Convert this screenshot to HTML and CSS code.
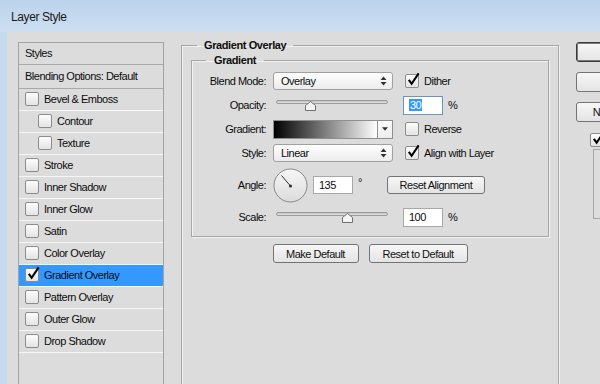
FILE: index.html
```html
<!DOCTYPE html>
<html lang="en">
<head>
    <meta charset="UTF-8">
    <meta name="viewport" content="width=device-width, initial-scale=1.0">
    <title>Layer Style</title>
    <link rel="stylesheet" href="styles.css">
</head>
<body>
    <div class="titlebar">Layer Style</div>

    <div class="frame">
        <ul class="styles-list">
            <li class="head styles-head">Styles</li>
            <li class="head blend-head">Blending Options: Default</li>
            <li><span class="cb"></span>Bevel &amp; Emboss</li>
            <li class="sub"><span class="cb"></span>Contour</li>
            <li class="sub"><span class="cb"></span>Texture</li>
            <li><span class="cb"></span>Stroke</li>
            <li><span class="cb"></span>Inner Shadow</li>
            <li><span class="cb"></span>Inner Glow</li>
            <li><span class="cb"></span>Satin</li>
            <li><span class="cb"></span>Color Overlay</li>
            <li class="selected">
                <span class="cb"><svg class="tick" viewBox="0 0 16 16"><path d="M3 8.5 L6 12.5 L13.5 1.5"/></svg></span>Gradient Overlay
            </li>
            <li><span class="cb"></span>Pattern Overlay</li>
            <li><span class="cb"></span>Outer Glow</li>
            <li><span class="cb"></span>Drop Shadow</li>
        </ul>

        <div class="main">
            <fieldset class="group outer">
                <legend>Gradient Overlay</legend>
                <fieldset class="group inner">
                    <legend>Gradient</legend>

                    <div class="row">
                        <span class="lbl">Blend Mode:</span>
                        <div class="select">
                            <span>Overlay</span>
                            <svg class="updown" viewBox="0 0 7 10"><path d="M0.5 4 L3.5 0.5 L6.5 4 Z M0.5 6 L3.5 9.5 L6.5 6 Z"/></svg>
                        </div>
                        <span class="check">
                            <span class="cb"><svg class="tick" viewBox="0 0 16 16"><path d="M3 8.5 L6 12.5 L13.5 1.5"/></svg></span>Dither
                        </span>
                    </div>

                    <div class="row">
                        <span class="lbl">Opacity:</span>
                        <div class="slider">
                            <div class="track"></div>
                            <svg class="thumb" style="left: 30%" viewBox="0 0 11 10"><path d="M0.5 9.5 V4.5 L5.5 0.5 L10.5 4.5 V9.5 Z"/></svg>
                        </div>
                        <div class="field focus"><span class="sel">30</span></div>
                        <span class="unit">%</span>
                    </div>

                    <div class="row">
                        <span class="lbl">Gradient:</span>
                        <div class="gradient">
                            <div class="ramp"></div>
                            <div class="drop"><svg viewBox="0 0 7 4"><path d="M0 0 H7 L3.5 4 Z"/></svg></div>
                        </div>
                        <span class="check"><span class="cb"></span>Reverse</span>
                    </div>

                    <div class="row">
                        <span class="lbl">Style:</span>
                        <div class="select">
                            <span>Linear</span>
                            <svg class="updown" viewBox="0 0 7 10"><path d="M0.5 4 L3.5 0.5 L6.5 4 Z M0.5 6 L3.5 9.5 L6.5 6 Z"/></svg>
                        </div>
                        <span class="check">
                            <span class="cb"><svg class="tick" viewBox="0 0 16 16"><path d="M3 8.5 L6 12.5 L13.5 1.5"/></svg></span>Align with Layer
                        </span>
                    </div>

                    <div class="row angle-row">
                        <span class="lbl">Angle:</span>
                        <svg class="dial" viewBox="0 0 35 35">
                            <defs>
                                <linearGradient id="dialFill" x1="0" y1="0" x2="0" y2="1">
                                    <stop offset="0" stop-color="#f6f6f6"/>
                                    <stop offset="1" stop-color="#dcdcdc"/>
                                </linearGradient>
                            </defs>
                            <circle cx="17.5" cy="17.5" r="16.5" fill="url(#dialFill)" stroke="#888"/>
                            <line x1="17.5" y1="18" x2="8.5" y2="7.5" stroke="#333" stroke-width="1"/>
                            <circle cx="17.5" cy="18" r="1.6" fill="#333"/>
                        </svg>
                        <div class="field angle-field">135</div>
                        <span class="deg">°</span>
                        <button class="btn reset-align">Reset Alignment</button>
                    </div>

                    <div class="row">
                        <span class="lbl">Scale:</span>
                        <div class="slider">
                            <div class="track"></div>
                            <svg class="thumb" style="left: 61%" viewBox="0 0 11 10"><path d="M0.5 9.5 V4.5 L5.5 0.5 L10.5 4.5 V9.5 Z"/></svg>
                        </div>
                        <div class="field">100</div>
                        <span class="unit">%</span>
                    </div>
                </fieldset>

                <div class="defaults">
                    <button class="btn make-default">Make Default</button>
                    <button class="btn reset-default">Reset to Default</button>
                </div>
            </fieldset>
        </div>

        <div class="side">
            <button class="btn side-btn default">OK</button>
            <button class="btn side-btn">Cancel</button>
            <button class="btn side-btn">New Style...</button>
            <span class="check preview-check">
                <span class="cb"><svg class="tick" viewBox="0 0 16 16"><path d="M3 8.5 L6 12.5 L13.5 1.5"/></svg></span>Preview
            </span>
            <div class="preview"></div>
        </div>
    </div>
</body>
</html>
```

FILE: styles.css
```css
* {
    box-sizing: border-box;
}
html, body {
    margin: 0;
    height: 100%;
    overflow: hidden;
}
body {
    font-family: 'Liberation Sans', Arial, sans-serif;
    font-size: 11px;
    letter-spacing: -0.5px;
    color: #0c0c0c;
    background: #dcdcdc;
}
.titlebar {
    height: 32px;
    padding: 10px 0 0 11px;
    background: linear-gradient(#bcd3ec, #cddff1);
    font-size: 12px;
    letter-spacing: -0.4px;
    color: #1a1a1a;
}
.frame {
    display: flex;
    align-items: flex-start;
    height: 352px;
    border-left: 7px solid #c4d8ee;
    padding-left: 11px;
}

/* left styles list */
.styles-list {
    flex: none;
    list-style: none;
    margin: 10px 0 0;
    padding: 0;
    width: 146px;
    height: 360px;
    border: 1px solid #a3a3a3;
}
.styles-list li {
    display: flex;
    align-items: center;
    height: 22px;
    padding: 0 0 1px 6px;
    border-bottom: 1px solid #f6f6f6;
}
.styles-list .head {
    border-bottom-color: #a9a9a9;
}
.styles-list .blend-head {
    height: 24px;
}
.styles-list .sub {
    padding-left: 19px;
}
.styles-list .selected {
    background: #3399ff;
}
.cb {
    position: relative;
    flex: none;
    width: 14px;
    height: 14px;
    margin-right: 5px;
    border: 1px solid #8c8c8c;
    border-radius: 2px;
    background: linear-gradient(#fdfdfd, #e3e3e3);
}
.tick {
    position: absolute;
    left: 0;
    top: -3px;
    width: 15px;
    height: 15px;
    fill: none;
    stroke: #000;
    stroke-width: 2.2;
}

/* main panel */
.main {
    flex: none;
    width: 378px;
    margin: 6px 0 0 17px;
}
.group {
    margin: 0;
    min-width: 0;
    border: 1px solid #a6a6a6;
    box-shadow: inset 1px 1px 0 #f2f2f2, 1px 1px 0 #f2f2f2;
}
.group legend {
    font-weight: bold;
    line-height: 14px;
    letter-spacing: -0.4px;
}
.outer {
    height: 400px;
    padding: 1px 9px 0;
}
.outer > legend {
    margin-left: 6px;
    padding: 0 7px;
}
.inner {
    padding: 4px 0 9px;
    display: flex;
    flex-direction: column;
    gap: 4px;
}
.inner > legend {
    margin-left: 14px;
    padding: 0 8px;
}
.row {
    display: flex;
    align-items: center;
    height: 20px;
}
.angle-row {
    height: 36px;
}
.lbl {
    width: 74px;
    margin-right: 7px;
    text-align: right;
}
.select {
    position: relative;
    display: flex;
    align-items: center;
    width: 120px;
    height: 18px;
    padding-left: 7px;
    border: 1px solid #a0a0a0;
    border-radius: 3px;
    background: linear-gradient(#fefefe, #ececec);
}
.updown {
    position: absolute;
    right: 5px;
    top: 3px;
    width: 7px;
    height: 10px;
    fill: #333;
}
.check {
    display: flex;
    align-items: center;
    margin-left: 12px;
}
.slider {
    position: relative;
    width: 120px;
    height: 20px;
}
.track {
    position: absolute;
    left: 3px;
    top: 5px;
    width: 112px;
    height: 4px;
    border: 1px solid #9c9c9c;
    border-radius: 2px;
    background: linear-gradient(#bdbdbd, #e6e6e6);
}
.thumb {
    position: absolute;
    top: 6px;
    width: 11px;
    height: 10px;
    margin-left: -4px;
    fill: #f4f4f4;
    stroke: #707070;
}
.field {
    width: 40px;
    height: 19px;
    margin-left: 10px;
    padding: 2px 0 0 5px;
    border: 1px solid #a8a8a8;
    background: #fff;
}
.field.focus {
    border-color: #6f93bd;
}
.sel {
    padding: 0 1px;
    background: #3399ff;
    color: #fff;
}
.unit {
    margin-left: 5px;
}
.gradient {
    display: flex;
    width: 120px;
    height: 19px;
    border: 1px solid #8f8f8f;
}
.ramp {
    flex: 1;
    background: linear-gradient(to right, #000, #fff);
}
.drop {
    display: flex;
    align-items: center;
    justify-content: center;
    width: 15px;
    border-left: 1px solid #8f8f8f;
    background: linear-gradient(#fdfdfd, #ededed);
}
.drop svg {
    width: 6px;
    height: 4px;
    fill: #333;
}
.dial {
    width: 35px;
    height: 35px;
}
.angle-field {
    margin-left: 5px;
    height: 18px;
}
.deg {
    margin: -6px 0 0 5px;
}
.btn {
    font-family: inherit;
    font-size: 11px;
    letter-spacing: -0.5px;
    color: #111;
    padding: 0;
    border: 1px solid #737373;
    border-radius: 3px;
    background: linear-gradient(#f7f7f7, #e4e4e4);
}
.reset-align {
    width: 98px;
    height: 18px;
    margin-left: 25px;
}
.defaults {
    display: flex;
    justify-content: center;
    gap: 10px;
    margin-top: 7px;
}
.make-default {
    width: 86px;
    height: 19px;
}
.reset-default {
    width: 99px;
    height: 19px;
}

/* right column */
.side {
    flex: none;
    display: flex;
    flex-direction: column;
    width: 86px;
    margin: 10px 0 0 17px;
}
.side-btn {
    height: 20px;
    margin-bottom: 10px;
}
.side-btn.default {
    border-color: #3a3a3a;
    box-shadow: inset 0 0 0 1px #7a7a7a;
}
.preview-check {
    margin: 1px 0 0 14px;
}
.preview {
    width: 60px;
    height: 70px;
    margin: 2px 0 0 17px;
    border: 1px solid #a6a6a6;
}
```
